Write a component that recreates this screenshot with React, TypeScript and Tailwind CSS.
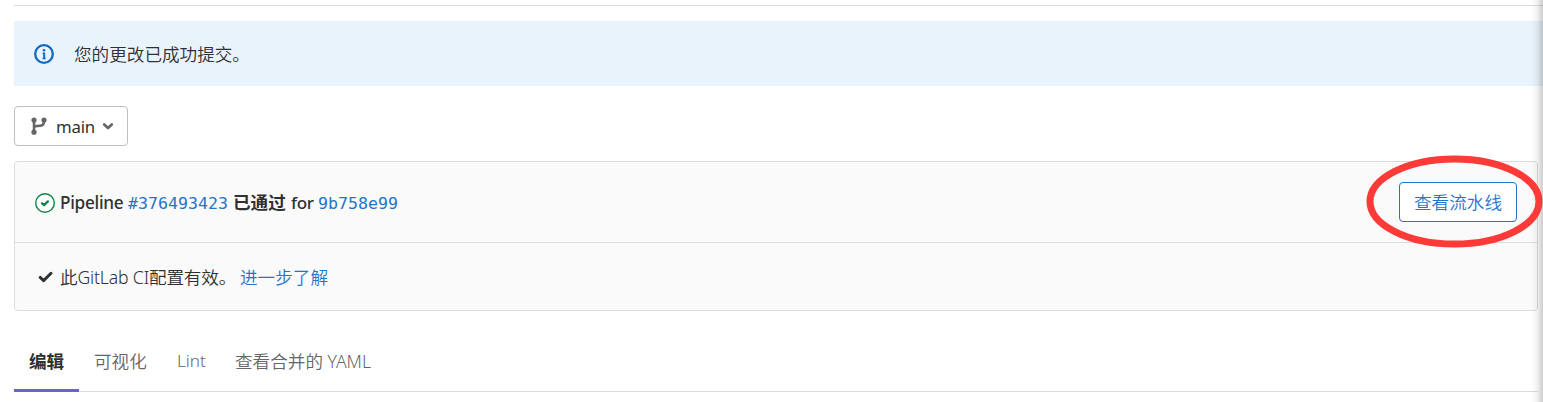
import React from "react";

function InfoIcon() {
  return (
    <svg className="size-5 shrink-0" viewBox="0 0 20 20" fill="none">
      <circle cx="10" cy="10" r="8.8" stroke="#1068bf" strokeWidth="2.3" />
      <circle cx="10" cy="6.2" r="1.3" fill="#1068bf" />
      <path d="M8.6 9.4h1.6v4.8M8.6 14.4h3" stroke="#1068bf" strokeWidth="1.9" />
    </svg>
  );
}

function BranchIcon() {
  return (
    <svg className="h-[18px] w-4 shrink-0" viewBox="0 0 16 18" fill="none">
      <path d="M3 3v12M3 11.2c0-1.4 1-1.9 3-2.1l3.4-.3c2.2-.2 3.4-1.2 3.4-3.2V3" stroke="#666" strokeWidth="2.5" />
      <circle cx="3" cy="3" r="2.6" fill="#666" />
      <circle cx="3" cy="15.2" r="2.6" fill="#666" />
      <circle cx="13" cy="3" r="2.6" fill="#666" />
    </svg>
  );
}

function ChevronIcon() {
  return (
    <svg className="h-2 w-3 shrink-0" viewBox="0 0 12 8" fill="none">
      <path d="M2.2 2.4l3.8 3.6 3.8-3.6" stroke="#666" strokeWidth="2.7" strokeLinecap="round" strokeLinejoin="round" />
    </svg>
  );
}

function PassedIcon() {
  return (
    <svg className="mt-0.5 size-5 shrink-0" viewBox="0 0 20 20" fill="none">
      <circle cx="10" cy="10" r="9.3" fill="#fff" stroke="#108548" strokeWidth="1.4" />
      <path d="M7 10.3l2 1.8 3.9-3.7" stroke="#108548" strokeWidth="2.3" strokeLinecap="round" strokeLinejoin="round" />
    </svg>
  );
}

function CheckIcon() {
  return (
    <svg className="h-3 w-4 shrink-0" viewBox="0 0 16 12" fill="none">
      <path d="M3.2 6.4l3.4 3.2L14 2.2" stroke="#303030" strokeWidth="2.9" strokeLinecap="round" strokeLinejoin="round" />
    </svg>
  );
}

export default function App() {
  return (
    <div className="relative h-[402px] w-full overflow-hidden bg-white pl-[14px] pt-[5px] font-['Noto_Sans','Noto_Sans_CJK_SC',sans-serif] text-[17.6px] leading-6 font-[350] whitespace-nowrap text-[#303030]">
      <div className="h-px bg-[#dbdbdb]" />
      <div className="mt-[15px] flex h-[65px] items-center bg-[#e9f3fc] pl-5">
        <InfoIcon />
        <span className="ml-5">您的更改已成功提交。</span>
      </div>

      <button className="mt-5 flex h-10 w-[114px] items-center rounded-[4px] border border-[#bfbfbf] bg-white pl-4">
        <BranchIcon />
        <span className="ml-[9px] w-[38px] pt-px text-[16.8px] font-normal tracking-[-0.2px]">main</span>
        <span className="ml-2">
          <ChevronIcon />
        </span>
      </button>

      <section className="mt-[15px] mr-[5px] h-[150px] rounded-[4px] border border-[#dbdbdb] bg-[#fafafa]">
        <div className="flex h-[81px] items-center border-b border-[#dbdbdb] pr-5 pl-5">
          <PassedIcon />
          <span className="ml-[5px] w-[68px] pt-[2px] text-[17.2px] font-medium tracking-[-0.28px]">Pipeline</span>
          <a className="w-[105px] pt-[3px] font-['DejaVu_Sans_Mono',monospace] text-[16.6px] font-normal text-[#1f75cb]">#376493423</a>
          <span className="w-[58px] font-bold">已通过</span>
          <span className="w-[27px] pt-[2px] text-[17px] font-medium tracking-[-0.3px]">for</span>
          <a className="pt-[3px] font-['DejaVu_Sans_Mono',monospace] text-[16.6px] font-normal text-[#1f75cb]">9b758e99</a>
          <button className="ml-auto h-10 w-[118px] rounded-[4px] border border-[#1f75cb] bg-white pb-px text-[#1f75cb]">
            查看流水线
          </button>
        </div>
        <div className="flex h-[67px] items-center pl-[22px]">
          <CheckIcon />
          <span className="ml-[7px] w-[180px] tracking-[-0.15px]">此GitLab CI配置有效。</span>
          <a className="text-[#1f75cb]">进一步了解</a>
        </div>
      </section>

      <nav className="mt-[22px] mr-[5px] flex h-[59px] border-b border-[#dbdbdb] text-[#666]">
        <div className="-mb-px flex h-[59px] w-[65px] justify-center border-b-[3px] border-[#6666c4] pt-4 font-bold text-[#303030]">
          编辑
        </div>
        <span className="ml-[15px] w-[83px] pt-4">可视化</span>
        <span className="w-[58px] pt-4 text-[17.2px]">Lint</span>
        <span className="pt-4">查看合并的 YAML</span>
      </nav>

      <div className="absolute inset-y-0 right-0 w-3 bg-linear-to-r from-transparent via-black/5 to-black/20" />
      <svg className="absolute top-[150px] left-[1360px] h-[104px] w-[183px]" viewBox="0 0 183 104" fill="none">
        <ellipse cx="94.5" cy="51.5" rx="84.5" ry="42.5" stroke="#fc3a38" strokeWidth="7" />
      </svg>
    </div>
  );
}
